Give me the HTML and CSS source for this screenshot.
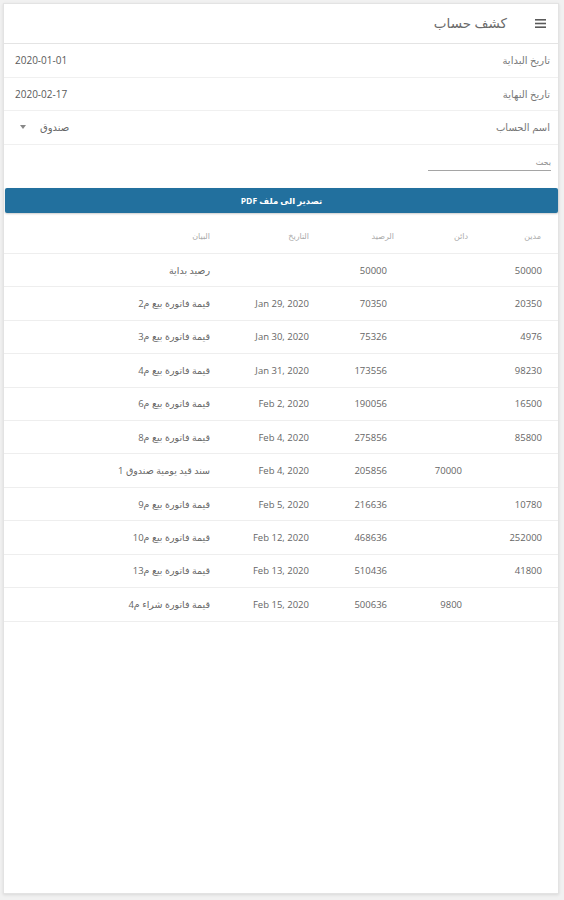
FILE: index.html
```html
<!DOCTYPE html>
<html lang="ar" dir="rtl">
<head>
<meta charset="utf-8">
<title>كشف حساب</title>
<link rel="stylesheet" href="styles.css">
</head>
<body>
<div class="card">
  <header class="toolbar">
    <span class="menu">
      <svg width="11" height="9" viewBox="0 0 11 9"><rect x="0" y="0" width="11" height="1.6"/><rect x="0" y="3.7" width="11" height="1.6"/><rect x="0" y="7.4" width="11" height="1.6"/></svg>
    </span>
    <h1 class="title">كشف حساب</h1>
  </header>

  <div class="field"><span class="label">تاريخ البداية</span><span class="value" dir="ltr">2020-01-01</span></div>
  <div class="field"><span class="label">تاريخ النهاية</span><span class="value" dir="ltr">2020-02-17</span></div>
  <div class="field"><span class="label">اسم الحساب</span><span class="value select"><span>صندوق</span><span class="caret"></span></span></div>

  <div class="search"><div class="search-input">بحث</div></div>

  <button class="export">تصدير الى ملف PDF</button>

  <div class="table">
    <div class="row thead">
      <div class="cell h-debit">مدين</div>
      <div class="cell h-credit">دائن</div>
      <div class="cell h-balance">الرصيد</div>
      <div class="cell">التاريخ</div>
      <div class="cell">البيان</div>
    </div>
    <div class="row"><div class="cell">50000</div><div class="cell"></div><div class="cell">50000</div><div class="cell"></div><div class="cell">رصيد بداية</div></div>
    <div class="row"><div class="cell">20350</div><div class="cell"></div><div class="cell">70350</div><div class="cell"><bdi>Jan 29, 2020</bdi></div><div class="cell">قيمة فاتورة بيع م2</div></div>
    <div class="row"><div class="cell">4976</div><div class="cell"></div><div class="cell">75326</div><div class="cell"><bdi>Jan 30, 2020</bdi></div><div class="cell">قيمة فاتورة بيع م3</div></div>
    <div class="row"><div class="cell">98230</div><div class="cell"></div><div class="cell">173556</div><div class="cell"><bdi>Jan 31, 2020</bdi></div><div class="cell">قيمة فاتورة بيع م4</div></div>
    <div class="row"><div class="cell">16500</div><div class="cell"></div><div class="cell">190056</div><div class="cell"><bdi>Feb 2, 2020</bdi></div><div class="cell">قيمة فاتورة بيع م6</div></div>
    <div class="row"><div class="cell">85800</div><div class="cell"></div><div class="cell">275856</div><div class="cell"><bdi>Feb 4, 2020</bdi></div><div class="cell">قيمة فاتورة بيع م8</div></div>
    <div class="row"><div class="cell"></div><div class="cell">70000</div><div class="cell">205856</div><div class="cell"><bdi>Feb 4, 2020</bdi></div><div class="cell">سند قيد يومية صندوق 1</div></div>
    <div class="row"><div class="cell">10780</div><div class="cell"></div><div class="cell">216636</div><div class="cell"><bdi>Feb 5, 2020</bdi></div><div class="cell">قيمة فاتورة بيع م9</div></div>
    <div class="row"><div class="cell">252000</div><div class="cell"></div><div class="cell">468636</div><div class="cell"><bdi>Feb 12, 2020</bdi></div><div class="cell">قيمة فاتورة بيع م10</div></div>
    <div class="row"><div class="cell">41800</div><div class="cell"></div><div class="cell">510436</div><div class="cell"><bdi>Feb 13, 2020</bdi></div><div class="cell">قيمة فاتورة بيع م13</div></div>
    <div class="row"><div class="cell"></div><div class="cell">9800</div><div class="cell">500636</div><div class="cell"><bdi>Feb 15, 2020</bdi></div><div class="cell">قيمة فاتورة شراء م4</div></div>
  </div>
</div>
</body>
</html>
```

FILE: styles.css
```css
* { box-sizing: border-box; margin: 0; padding: 0; }
html, body { background: #f1f1f1; }
body {
  width: 564px;
  height: 900px;
  padding: 3px 5px 0 3px;
  font-family: "Open Sans", "DejaVu Sans", sans-serif;
  color: #666;
  direction: rtl;
  overflow: hidden;
}
.card {
  height: 891px;
  background: #fff;
  border: 1px solid #e3e3e3;
  box-shadow: 0 1px 3px rgba(0,0,0,0.10);
}
.toolbar {
  height: 40px;
  border-bottom: 1px solid #e4e4e4;
  display: flex;
  align-items: center;
  gap: 28px;
  padding-right: 12px;
}
.menu svg { display: block; fill: #5a5a5a; }
.title {
  font-size: 13.5px;
  font-weight: normal;
  color: #6a6a6a;
  line-height: 1;
}
.field {
  height: 33.6px;
  border-bottom: 1px solid #f0f0f0;
  display: flex;
  align-items: center;
  justify-content: space-between;
  padding: 0 8px 0 11px;
}
.label { font-size: 10px; color: #777; }
.value { font-size: 10px; color: #5a5a5a; }
.select { display: flex; align-items: center; gap: 14px; color: #666; }
.caret {
  width: 0; height: 0;
  border-left: 3px solid transparent;
  border-right: 3px solid transparent;
  border-top: 4px solid #888;
  margin-left: 5px;
}
.search {
  height: 43px;
  padding: 12px 7px 0 0;
}
.search-input {
  width: 123px;
  height: 14px;
  border-bottom: 1px solid #a5a5a5;
  font-size: 8px;
  color: #888;
  line-height: 10px;
}
.export {
  display: block;
  width: calc(100% - 1px);
  margin-left: 1px;
  height: 25px;
  border: none;
  border-radius: 2px;
  background: #22709e;
  color: #fff;
  font-family: "Open Sans", "DejaVu Sans", sans-serif;
  font-weight: bold;
  font-size: 8.5px;
  box-shadow: 0 1px 2px rgba(0,0,0,0.2);
}
.table { display: grid; }
.row {
  display: grid;
  grid-template-columns: 80px 75px 78px 99px 1fr;
  height: 33.45px;
  border-bottom: 1px solid #eeeeee;
  align-items: center;
  font-size: 9.5px;
  color: #666;
}
.cell { padding-right: 16px; text-align: right; white-space: nowrap; }
.thead {
  height: 41px;
  font-size: 8px;
  color: #aaa;
  padding-top: 5px;
}
.h-debit { padding-right: 17px; }
.h-credit { padding-right: 10px; }
.h-balance { padding-right: 9px; }
```
